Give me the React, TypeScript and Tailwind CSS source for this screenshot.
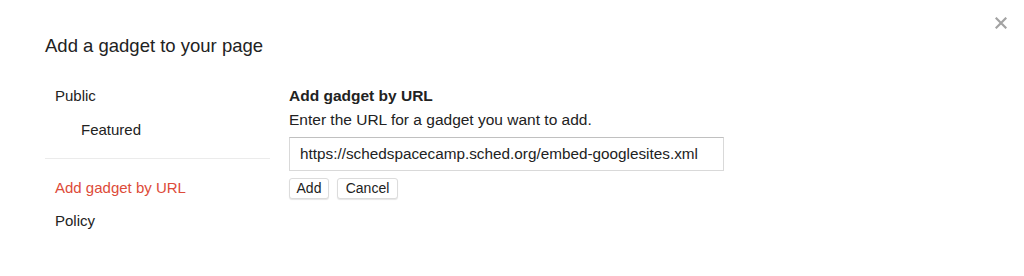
import React from 'react'

const NAV_FONT = "font-['Liberation_Sans',Arial,sans-serif]"

function CloseIcon() {
  return (
    <svg width="12" height="12" viewBox="0 0 12 12" aria-hidden="true">
      <path d="M1.5 1.5 L10.5 10.5 M10.5 1.5 L1.5 10.5" stroke="#a3a3a3" strokeWidth="2.2" strokeLinecap="square" />
    </svg>
  )
}

export default function App() {
  return (
    <div className={`relative w-[1024px] h-[276px] bg-white text-[#222] ${NAV_FONT}`}>
      {/* close */}
      <button className="absolute left-[995px] top-[17px] w-[12px] h-[12px] flex items-center justify-center">
        <CloseIcon />
      </button>

      <div className="pl-[45px] pt-[34px]">
        <h1 className="text-[18.5px] leading-[24px] font-normal">Add a gadget to your page</h1>

        <div className="mt-[28px] flex">
          {/* left nav */}
          <nav className="w-[225px] shrink-0 text-[15px]">
            <div className="pl-[10px] h-[20px] leading-[20px]">Public</div>
            <div className="pl-[36px] h-[20px] leading-[20px] mt-[13.5px]">Featured</div>
            <div className="mt-[18px] h-px bg-[#ebebeb]" />
            <div className="pl-[10px] h-[20px] leading-[20px] mt-[19px] text-[#dd4b39]">Add gadget by URL</div>
            <div className="pl-[10px] h-[20px] leading-[20px] mt-[13.5px]">Policy</div>
          </nav>

          {/* content */}
          <div className="ml-[19px]">
            <h2 className="text-[15.5px] leading-[20px] font-bold">Add gadget by URL</h2>
            <p className="text-[15.5px] leading-[20px] mt-[4px]">Enter the URL for a gadget you want to add.</p>
            <input
              type="text"
              readOnly
              value="https://schedspacecamp.sched.org/embed-googlesites.xml"
              className="mt-[7px] block w-[435px] h-[34px] px-[10px] text-[15.3px] text-[#222] bg-white border border-[#d9d9d9] border-t-[#c0c0c0] outline-none font-['Liberation_Sans',Arial,sans-serif]"
            />
            <div className="mt-[7px] flex gap-[8px]">
              <button className="w-[40px] h-[21px] text-[14px] leading-[19px] bg-white border border-[#dcdcdc] rounded-[3px] shadow-[0_1px_1px_rgba(0,0,0,0.1)] text-[#222]">Add</button>
              <button className="w-[61px] h-[21px] text-[14px] leading-[19px] bg-white border border-[#dcdcdc] rounded-[3px] shadow-[0_1px_1px_rgba(0,0,0,0.1)] text-[#222]">Cancel</button>
            </div>
          </div>
        </div>
      </div>
    </div>
  )
}
